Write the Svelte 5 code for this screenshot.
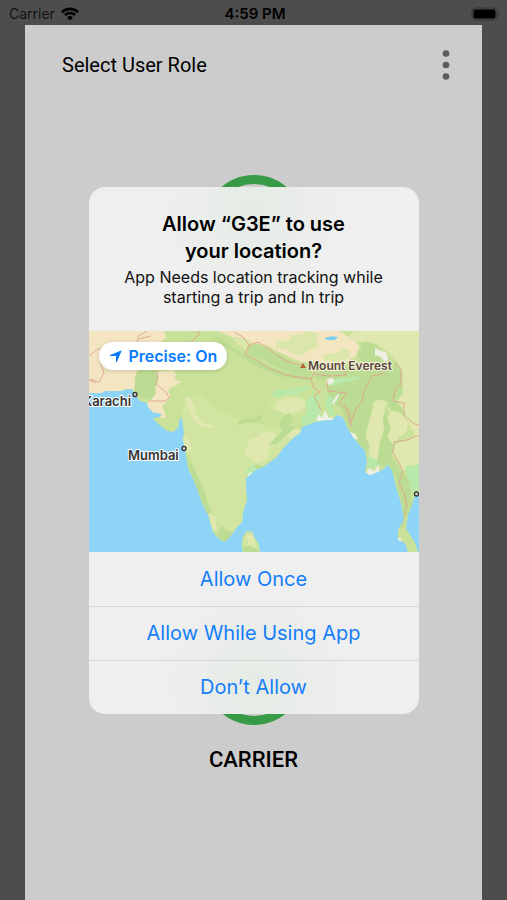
<script lang="ts">
	const roles = ['', 'CARRIER'];
	const actions = ['Allow Once', 'Allow While Using App', 'Don’t Allow'];

	let precise = $state(true);
	let open = $state(true);
</script>

<div class="screen">
	<header class="status">
		<div class="status__carrier">
			<span>Carrier</span>
			<svg class="wifi" viewBox="0 0 18 14" aria-hidden="true">
				<path d="M1 5.2a11.4 11.4 0 0 1 16 0" />
				<path d="M3.9 8.1a7.3 7.3 0 0 1 10.2 0" />
				<path class="wifi__dot" d="M9 13.4 6.1 10.5a4.1 4.1 0 0 1 5.8 0z" />
			</svg>
		</div>
		<span class="status__time">4:59 PM</span>
		<svg class="battery" viewBox="0 0 30 14" aria-hidden="true">
			<rect class="battery__case" x="1" y="1" width="25" height="12" rx="4" />
			<rect x="2.5" y="2.5" width="22" height="9" rx="2" />
			<path class="battery__tip" d="M27.5 5q2 2 0 4z" />
		</svg>
	</header>

	<main class="page">
		<div class="toolbar">
			<h1 class="toolbar__title">Select User Role</h1>
			<button class="menu" aria-label="More options">
				<svg viewBox="0 0 8 32" aria-hidden="true">
					<circle cx="4" cy="4.500" r="3.300" />
					<circle cx="4" cy="16" r="3.300" />
					<circle cx="4" cy="27.500" r="3.300" />
				</svg>
			</button>
		</div>
		<div class="roles">
			{#each roles as role}
				<div class="role">
					<div class="role__ring"></div>
					{#if role}
						<h2 class="role__name">{role}</h2>
					{/if}
				</div>
			{/each}
		</div>
	</main>

	{#if open}
		<div class="overlay">
			<div class="dialog" role="alertdialog" aria-labelledby="dialog-title" aria-describedby="dialog-text">
				<div class="dialog__head">
					<h2 id="dialog-title" class="dialog__title">Allow “G3E” to use<br />your location?</h2>
					<p id="dialog-text" class="dialog__text">App Needs location tracking while<br />starting a trip and In trip</p>
				</div>

				<div class="map">
					<svg class="map__art" viewBox="0 0 330 221" preserveAspectRatio="xMidYMid slice" aria-hidden="true">
						<defs>
							<clipPath id="land">
								<path
									d="M0 0H330V164L325 166 323 174 319 184 317 197 321 204 326 212 329 221H319L316 212 309 209V199L315 189 313 176 308 159 303 139 298 133 296 137 289 141 281 144 276 141 278 131 276 119 273 117 264 106 258 96 254 86 248 84 243 89 236 89 226 91 213 96 211 102 204 107 194 117 188 126 181 131 174 136 166 139 161 144 157 147V159L158 169 154 181 153 191 148 196 141 206 135 211 129 207 124 201 119 184 113 172 106 152 99 137 96 119 94 109 95 101 93 87 91 87 89 97 84 101 78 100 68 92 64 87 71 86 73 83 64 81 59 76 58 72 51 70 46 64 43 58 38 58 31 60 16 60 12 62H0Z"
								/>
								<path d="M154 221 153 214 154 206 158 200 163 201 165 206 169 212 171 221Z" />
							</clipPath>
						</defs>
						<rect width="330" height="221" fill="#8dd4f6" />
						<g clip-path="url(#land)">
							<rect width="330" height="221" fill="#c9e199" />
							<!-- terrain, drawn on a grid three times finer -->
							<g transform="scale(0.33333)" stroke-linejoin="round">
								<path
									fill="#d1e4a0"
									d="M285 205 330 185 370 225 440 262 500 275 560 290 620 290 600 350 540 390 470 440 500 520 450 600 400 600 360 520 310 400 275 300ZM560 185 640 195 650 240 600 260 540 225ZM440 600H530V663H440Z"
								/>
								<g fill="#f3e5c0">
									<path d="M0 0H225L232 20 205 40 190 75 160 105 145 120 137 145 140 172 120 182 0 190Z" />
									<path d="M200 124 250 116 262 130 255 145 278 152 262 163 247 168 238 180 246 196 232 213 220 225 232 262 205 258 170 225 178 212 200 190 198 170 208 150Z" />
									<path d="M385 0H750L770 12 795 28 812 45 800 75 770 95 720 95 640 92 600 78 570 62 530 42 490 36 465 22 430 18Z" />
								</g>
								<g fill="#e0e8b0">
									<path d="M795 0H990V330L965 290 948 255 925 210 942 190 940 120 925 92 900 65 870 45 835 30 800 34 780 18Z" />
									<path d="M855 212 882 203 895 210 890 228 904 240 882 262 885 300 872 330 868 380 850 410 836 400 842 350 830 322 838 280 848 250Z" />
									<path d="M912 235 935 246 958 276 952 304 930 318 912 340 895 318 903 290 892 262Z" />
									<path d="M820 168 832 170 824 200 818 232 806 252 803 222Z" />
									<path d="M920 340 990 312V405L955 402 942 425 925 385 910 370Z" />
									<path d="M484 322 510 318 522 303 558 306 568 322 560 342 540 352 536 378 510 396 488 390 484 378 465 368Z" />
									<path d="M562 210 600 200 646 206 655 222 625 244 588 248 556 232Z" />
									<path d="M288 194 306 200 318 228 326 262 348 278 378 283 370 290 335 286 310 262 298 230ZM283 318 300 325 308 350 296 366 284 352Z" />
									<path d="M358 545 378 555 385 600 372 598ZM470 610 492 612 500 650 478 640ZM598 300 625 290 645 302 630 320 598 325Z" />
								</g>
								<g fill="#dbe6ab">
									<path d="M562 32 600 28 608 12 640 10 650 0 690 8 682 28 690 48 660 58 640 74 615 68 590 55 560 50Z" />
									<path d="M700 72 740 66 765 50 785 60 780 82 745 92 705 88ZM430 20 480 28 500 44 472 58 450 42Z" />
								</g>
								<g fill="#bcdc94">
									<path d="M142 124 166 114 198 118 208 142 198 168 200 188 184 208 160 202 148 190 136 174Z" />
									<path d="M362 10 400 24 430 48 470 72 520 98 570 118 620 130 665 138 668 150 620 144 560 132 500 104 452 72 410 48Z" />
									<path d="M478 44 500 38 540 58 585 78 610 98 645 112 670 118 665 135 610 125 560 106 520 84 475 72Z" />
									<path d="M678 112 740 110 800 108 818 92 804 68 820 52 810 38 832 33 868 42 860 62 895 78 920 95 938 120 940 190 915 206 940 232 950 256 932 245 908 238 895 212 870 205 852 214 842 262 828 310 842 345 830 360 800 325 776 290 760 240 735 215 715 185 712 150 680 145Z" />
									<path d="M890 228 902 246 895 262 905 290 895 322 915 345 908 375 898 408 862 400 876 330 885 298 882 262Z" />
									<path d="M908 378 935 420 960 445 968 520 948 570 935 600 938 520 922 440 898 400Z" />
									<path d="M292 385 310 402 326 436 345 478 358 520 366 548 350 545 330 490 308 430Z" />
									<path d="M385 606 402 585 412 600 430 606 412 632 395 628ZM465 642 500 652 512 663H462Z" />
									<path d="M585 255 604 246 610 268 600 285 625 286 608 300 584 320 562 340 540 342 555 322 580 300 572 280Z" />
									<path d="M445 272 470 262 488 266 520 250 518 264 490 276 465 274 448 284ZM482 408 505 400 526 405 510 425 480 432Z" />
								</g>
								<g fill="#b8e9ab">
									<path d="M550 182 572 174 592 178 622 170 658 166 668 174 640 180 628 190 590 192 570 200 552 196Z" />
									<path d="M648 216 672 190 692 196 686 222 700 262 672 270 642 286 636 262 655 244ZM714 192 732 200 728 222 738 250 722 255 710 226Z" />
									<path d="M722 148 758 140 805 136 812 144 780 152 742 158 722 168ZM838 375 862 385 870 402 838 418ZM948 408 990 400V480H968L955 440ZM470 420 494 400 505 418 484 436Z" />
								</g>
								<g fill="#edf0e2">
									<path d="M858 52 875 60 892 64 898 86 888 94 875 78 858 72ZM712 146 730 140 738 150 722 162 712 158ZM682 262 690 250 700 262 708 238 720 262 732 256 728 272 690 280ZM730 212 744 192 752 188 744 206 732 222Z" />
									<path d="M828 430 840 412 856 420 868 402 872 426 845 434ZM784 302 800 310 806 328 790 318ZM480 426 498 422 494 438 476 438ZM924 628 934 618 938 632 928 636Z" />
								</g>
								<path d="M705 22 728 16 748 18 738 26 718 28Z" fill="#79cfee" />
							</g>
							<!-- borders -->
							<g class="borders">
								<path d="M0 25 9 18 21 17M15 18 12 33 15 42 10 51 1 48M0 49 7 52M48 6 58 0M62 5 49 8 46 17 38 27M67 40 69 45 67 53 77 61 80 67 76 70 60 70M110 0 109 5 101 12" />
								<path d="M145 1 154 6 160 14 169 11 178 17 188 24 197 30 212 34M160 14 156 24 168 29 181 38 197 44 222 48 225 41M222 49 225 57 231 61 225 65 232 79M225 43 240 45 257 44 256 40M238 50 239 60 258 62 250 72 257 78 262 95M262 95 261 82 255 73M262 92 267 78 273 70 276 58 283 45 296 42" />
								<path d="M306 32 312 38 312 54 306 58 304 70 315 72 315 84 325 93 330 94M330 104 318 109 305 111 304 122 309 130 314 140 310 152 315 162 318 175 313 192" />
							</g>
						</g>
						<g class="pins">
							<circle cx="46" cy="63.500" r="2" />
							<circle cx="95" cy="117.500" r="2" />
							<circle cx="327.500" cy="163" r="2" />
						</g>
						<path d="m214 32 3 5h-6z" fill="#b0623a" />
						<g class="places">
							<text x="-6" y="75">Karachi</text>
							<text x="39" y="129">Mumbai</text>
							<text class="places__peak" x="219" y="39">Mount Everest</text>
						</g>
					</svg>
					<button class="precise" aria-pressed={precise} onclick={() => (precise = !precise)}>
						<svg class="precise__icon" viewBox="0 0 14 14" aria-hidden="true">
							<path d="M12.800 1.200 8 12.800q-.6 1-1-.2V7H1.400q-1.200-.4-.2-1z" />
						</svg>
						Precise: {precise ? 'On' : 'Off'}
					</button>
				</div>

				{#each actions as action}
					<button class="action" onclick={() => (open = false)}>{action}</button>
				{/each}
			</div>
		</div>
	{/if}
</div>

<style>
	:global(body) {
		margin: 0;
		background: #4d4d4d;
	}

	h1,
	h2,
	p {
		margin: 0;
	}

	button {
		margin: 0;
		padding: 0;
		border: 0;
		background: none;
		font: inherit;
		cursor: pointer;
	}

	.screen {
		position: relative;
		min-height: 100vh;
		display: flex;
		flex-direction: column;
		background: #4d4d4d;
		font-family: Inter, 'Liberation Sans', sans-serif;
		color: #000;
	}

	.status {
		height: 25px;
		box-sizing: border-box;
		padding: 2px 6px 0 9px;
		display: grid;
		grid-template-columns: 1fr auto 1fr;
		align-items: center;
		font-size: 14px;
	}

	.status__carrier {
		display: flex;
		align-items: center;
		gap: 6px;
		color: #111;
	}

	.status__time {
		font-size: 15px;
		font-weight: 600;
	}

	.wifi {
		width: 18px;
		height: 14px;
		fill: none;
		stroke: #000;
		stroke-width: 2.6;
	}

	.wifi__dot {
		fill: #000;
		stroke: none;
	}

	.battery {
		width: 30px;
		height: 14px;
		justify-self: end;
	}

	.battery__case {
		fill: none;
		stroke: #333;
	}

	.battery__tip {
		fill: #333;
	}

	.page {
		flex: 1;
		margin: 0 25px;
		background: #ccc;
		font-family: Roboto, sans-serif;
	}

	.toolbar {
		height: 80px;
		padding: 0 32px 0 37px;
		display: flex;
		align-items: center;
		justify-content: space-between;
	}

	.toolbar__title {
		font-size: 20px;
		font-weight: 400;
	}

	.menu {
		display: flex;
	}

	.menu svg {
		width: 8px;
		height: 32px;
		fill: #5c5c5c;
	}

	.roles {
		padding: 70px 0 112px;
		display: grid;
		justify-items: center;
		gap: 350px;
	}

	.role {
		display: grid;
		justify-items: center;
		gap: 20px;
	}

	.role__ring {
		width: 100px;
		height: 100px;
		box-sizing: border-box;
		border: 9px solid #379b45;
		border-radius: 50%;
	}

	.role__name {
		font-size: 22px;
		line-height: 30px;
		font-weight: 500;
	}

	.overlay {
		position: absolute;
		inset: 0;
		display: grid;
		place-items: center;
	}

	.dialog {
		width: 330px;
		display: grid;
		overflow: hidden;
		border-radius: 16px;
		background:
			radial-gradient(circle at 50% 20px, #e5ebe5, transparent 100px),
			radial-gradient(circle at 50% calc(100% - 30px), #e5ebe5, transparent 100px),
			#efefef;
	}

	.dialog__head {
		padding: 24px 16px;
		text-align: center;
	}

	.dialog__title {
		font-size: 20px;
		line-height: 27px;
		font-weight: 600;
	}

	.dialog__text {
		padding-top: 2px;
		font-size: 16px;
		line-height: 20px;
		color: #111;
	}

	.map {
		position: relative;
		height: 221px;
	}

	.map__art {
		display: block;
		width: 100%;
		height: 100%;
	}

	.borders {
		fill: none;
		stroke: #e0a58c;
		stroke-width: 0.9;
		stroke-linejoin: round;
	}

	.pins {
		fill: #ddd;
		stroke: #333;
		stroke-width: 1.3;
	}

	.places {
		font-size: 13px;
		font-weight: 600;
		fill: #333;
		stroke: #fff;
		stroke-width: 2px;
		stroke-linejoin: round;
		paint-order: stroke;
	}

	.places__peak {
		font-size: 12px;
		fill: #5b4638;
		stroke: #f4f4e0;
	}

	.precise {
		position: absolute;
		top: 11px;
		left: 10px;
		height: 28px;
		padding: 0 10px;
		display: flex;
		align-items: center;
		gap: 6px;
		border-radius: 14px;
		background: #fff;
		box-shadow: 0 1px 4px rgba(0, 0, 0, 0.15);
		font-size: 16px;
		font-weight: 600;
		color: #087aff;
	}

	.precise__icon {
		width: 14px;
		height: 14px;
		fill: currentColor;
	}

	.action {
		height: 54px;
		font-size: 20px;
		color: #147efb;
	}

	.action + .action {
		border-top: 1px solid #d6d8d6;
	}
</style>
